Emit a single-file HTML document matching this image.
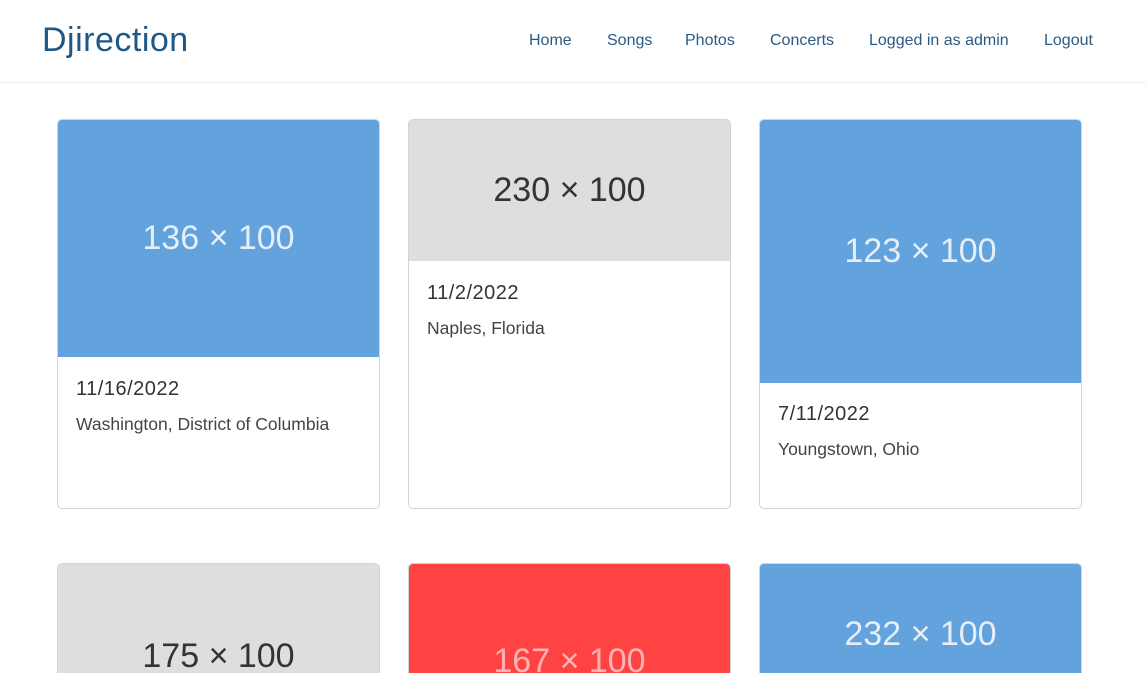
<!DOCTYPE html>
<html style="width:1146px;height:673px;overflow:hidden"><head><style>
*{margin:0;padding:0;box-sizing:border-box}
body{width:1146px;height:673px;overflow:hidden;background:#fff;font-family:"Liberation Sans",sans-serif}
.wrap{position:relative;width:1146px;height:673px;overflow:hidden}
.hdr{height:83px;border-bottom:1px solid #e3eef7;position:relative}
.logo{position:absolute;left:42px;top:21px;font-size:34px;color:#1f5785;letter-spacing:0.5px}
.nav{position:absolute;top:32px;font-size:16px;color:#2a5a86}
.card{position:absolute;width:323px;border:1px solid #d4d4d4;border-radius:5px;overflow:hidden;background:#fff}
.img{display:flex;align-items:center;justify-content:center;font-size:34px;color:#e6eef8}
.grey{background:#dedede;color:#333}
.blue{background:#62a2dd}
.red{background:#ff4343;color:#ffb3b3}
.d{position:absolute;left:18px;font-size:20px;color:#333;letter-spacing:0.5px}
.l{position:absolute;left:18px;font-size:17.5px;color:#444}
</style></head><body><div class="wrap">
<div class="hdr">
<div class="logo">Djirection</div>
<span class="nav" style="left:529px">Home</span>
<span class="nav" style="left:607px">Songs</span>
<span class="nav" style="left:685px">Photos</span>
<span class="nav" style="left:770px">Concerts</span>
<span class="nav" style="left:869px">Logged in as admin</span>
<span class="nav" style="left:1044px">Logout</span>
</div>
<div class="card" style="left:57px;top:119px;height:390px"><div class="img blue" style="height:237px">136 × 100</div><div class="d" style="top:258px">11/16/2022</div><div class="l" style="top:294px">Washington, District of Columbia</div></div>
<div class="card" style="left:408px;top:119px;height:390px"><div class="img grey" style="height:141px">230 × 100</div><div class="d" style="top:162px">11/2/2022</div><div class="l" style="top:198px">Naples, Florida</div></div>
<div class="card" style="left:759px;top:119px;height:390px"><div class="img blue" style="height:263px">123 × 100</div><div class="d" style="top:283px">7/11/2022</div><div class="l" style="top:319px">Youngstown, Ohio</div></div>
<div class="card" style="left:57px;top:563px;height:110px;border-bottom:0;border-radius:5px 5px 0 0"><div class="img grey" style="height:185px">175 × 100</div></div>
<div class="card" style="left:408px;top:563px;height:110px;border-bottom:0;border-radius:5px 5px 0 0"><div class="img red" style="height:195px">167 × 100</div></div>
<div class="card" style="left:759px;top:563px;height:110px;border-bottom:0;border-radius:5px 5px 0 0"><div class="img blue" style="height:140px">232 × 100</div></div>
</div></body></html>
